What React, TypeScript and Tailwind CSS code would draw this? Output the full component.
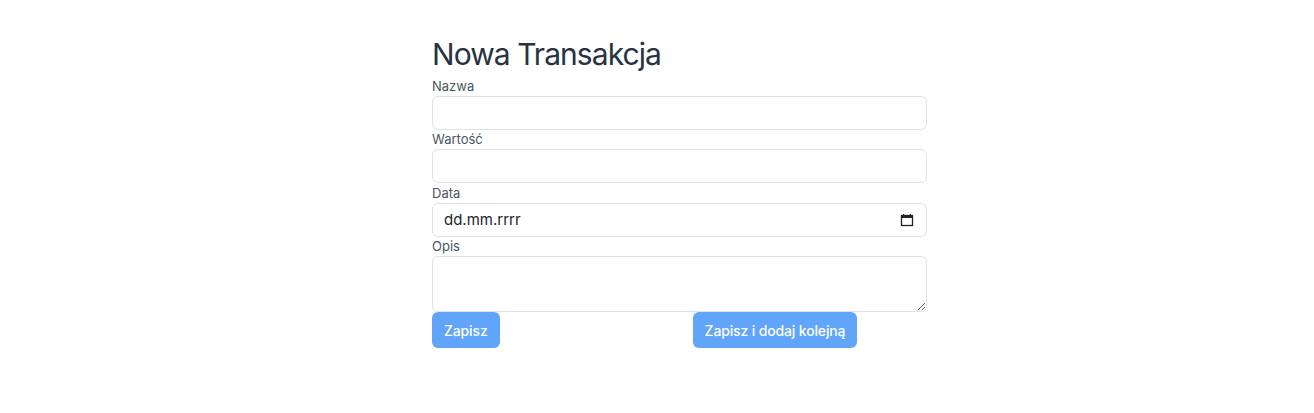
import React from "react";

export default function App() {
  return (
    <div className="min-h-[413px] w-full bg-white" style={{ fontFamily: "Inter, 'Noto Sans', sans-serif" }}>
      <div className="ml-[432px] flex w-[495px] flex-col pt-[34px]">
        <h1 className="text-[30px] leading-[40px] tracking-[-0.95px] text-[#283241]">Nowa Transakcja</h1>
        <label className="mt-[3px] h-[19px] text-[13px] leading-[19px] text-[#4b5563]">Nazwa</label>
        <input className="h-[34px] w-full rounded-md border border-[#dee2e6] bg-white px-3 outline-none" />
        <label className="h-[19px] text-[13px] leading-[19px] text-[#4b5563]">Wartość</label>
        <input className="h-[34px] w-full rounded-md border border-[#dee2e6] bg-white px-3 outline-none" />
        <label className="h-[20px] text-[13px] leading-[20px] text-[#4b5563]">Data</label>
        <div className="flex h-[34px] w-full items-center justify-between rounded-md border border-[#dee2e6] bg-white pl-[11px] pr-[12px]">
          <span className="text-[15px] text-[#212529]">dd.mm.rrrr</span>
          <svg width="14" height="14" viewBox="0 0 14 14">
            <rect x="1.5" y="2.5" width="11" height="10" fill="none" stroke="#222" strokeWidth="1.3" />
            <rect x="1.5" y="2.5" width="11" height="2.5" fill="#222" />
            <rect x="3" y="1" width="1.2" height="2" fill="#222" />
            <rect x="9.8" y="1" width="1.2" height="2" fill="#222" />
          </svg>
        </div>
        <label className="h-[19px] text-[13px] leading-[19px] text-[#4b5563]">Opis</label>
        <textarea className="block h-[56px] w-full rounded-md border border-[#dee2e6] bg-white px-3 outline-none" />
        <div className="flex gap-[193px]">
          <button className="h-[36px] rounded-md bg-[#60a5fa] px-3 text-[14px] font-medium tracking-[-0.15px] text-white">Zapisz</button>
          <button className="h-[36px] rounded-md bg-[#60a5fa] px-3 text-[14px] font-medium tracking-[-0.15px] text-white">Zapisz i dodaj kolejną</button>
        </div>
      </div>
    </div>
  );
}
